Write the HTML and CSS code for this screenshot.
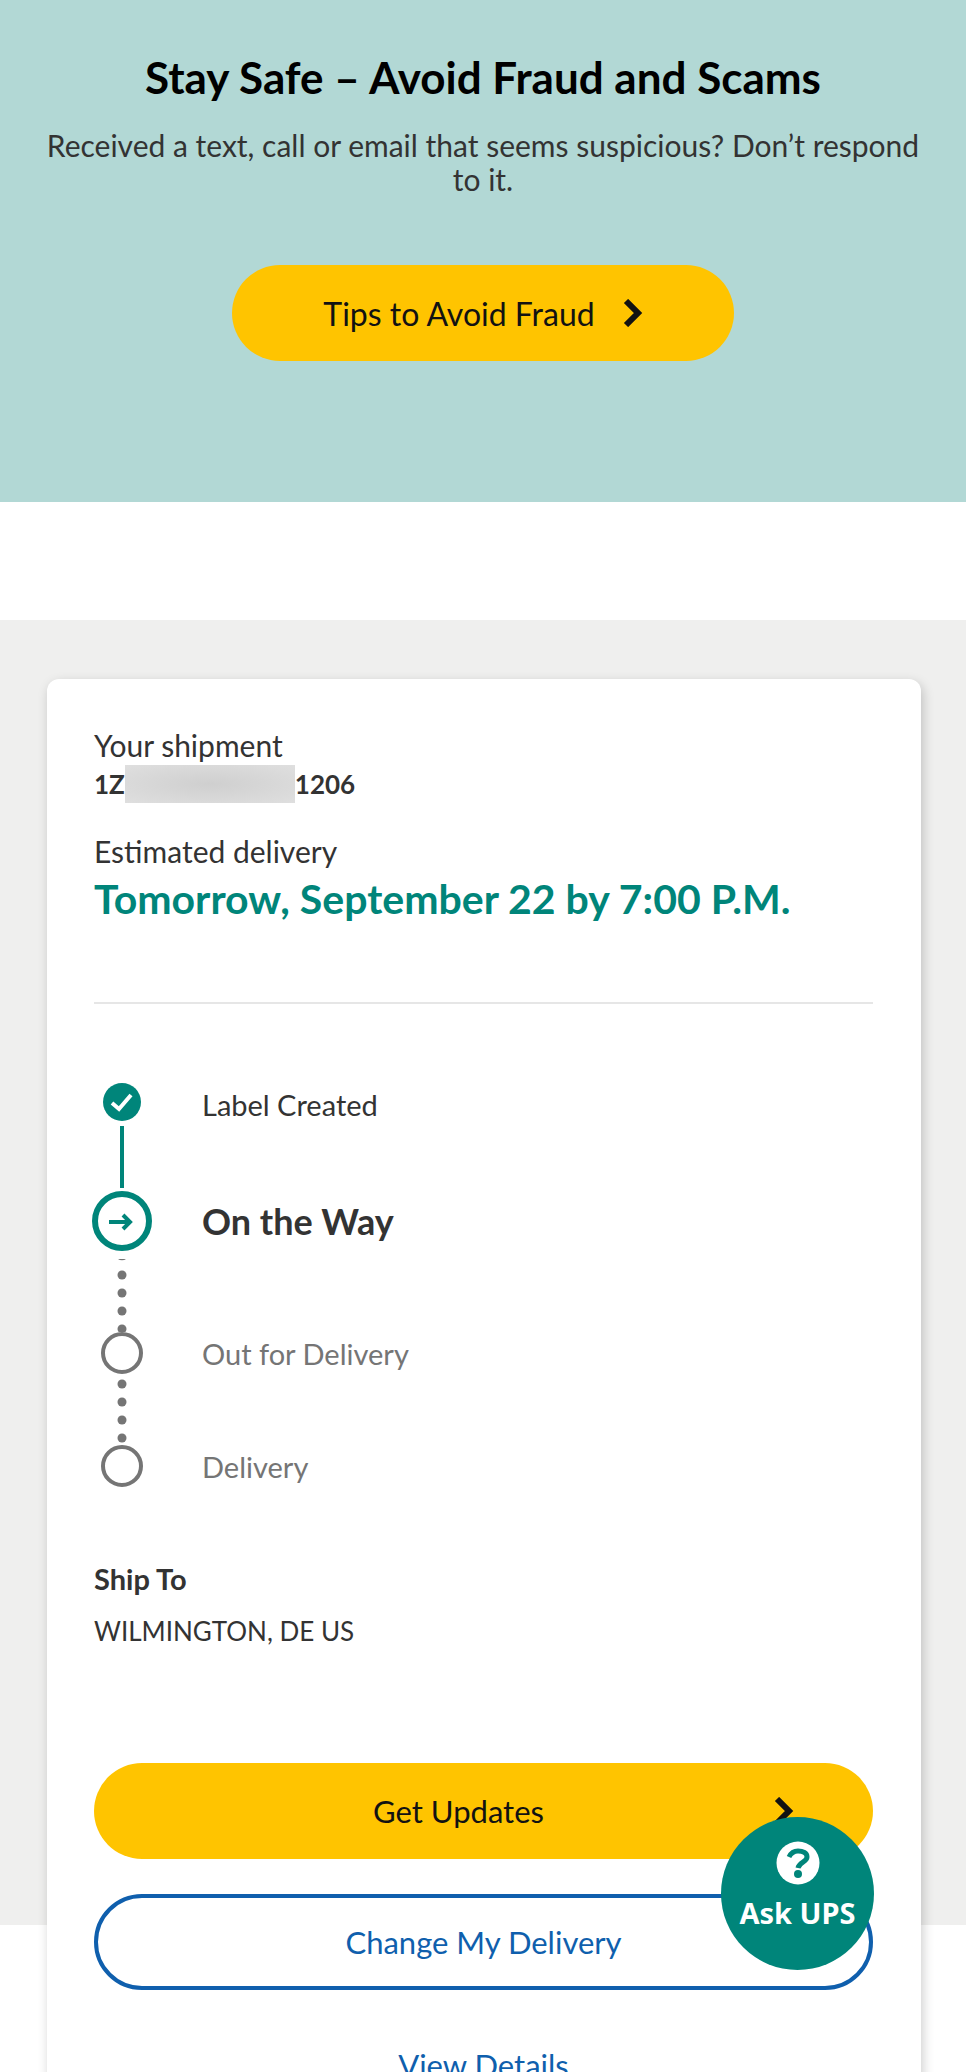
FILE: index.html
```html
<!DOCTYPE html>
<html lang="en">
<head>
    <meta charset="UTF-8">
    <meta name="viewport" content="width=device-width, initial-scale=1.0">
    <title>Your shipment</title>
    <link rel="stylesheet" href="styles.css">
</head>
<body>
    <div class="page">
        <header class="fraud">
            <h1>Stay Safe – Avoid Fraud and Scams</h1>
            <p>Received a text, call or email that seems suspicious? Don’t respond to it.</p>
            <a class="btn btn-tips" href="#">
                Tips to Avoid Fraud
                <svg class="chevron" viewBox="0 0 20 28"><path d="M3 2l12 12L3 26"/></svg>
            </a>
        </header>

        <main class="tracking">
            <section class="card">
                <p class="text">Your shipment</p>
                <p class="number">1Z<span class="hidden-digits"></span>1206</p>
                <p class="text">Estimated delivery</p>
                <h2>Tomorrow, September 22 by 7:00 P.M.</h2>
                <hr>

                <ol class="steps">
                    <li class="done">
                        <div class="marker">
                            <svg width="38" height="38" viewBox="0 0 38 38">
                                <circle class="fill" cx="19" cy="19" r="19"/>
                                <path class="tick" d="M9 20l7 6L28 12"/>
                            </svg>
                            <div class="line"></div>
                        </div>
                        <span class="label">Label Created</span>
                    </li>
                    <li class="current">
                        <div class="marker">
                            <svg width="60" height="60" viewBox="0 0 60 60">
                                <circle class="ring" cx="30" cy="30" r="27"/>
                                <path class="arrow" d="M17 31h21M31 24l7 7-7 7"/>
                            </svg>
                            <svg width="10" height="81" viewBox="0 0 10 81">
                                <path class="dot" d="M1 8h8a5 3 0 0 1-8 0z"/>
                                <circle class="dot" cx="5" cy="24" r="4.5"/>
                                <circle class="dot" cx="5" cy="42" r="4.5"/>
                                <circle class="dot" cx="5" cy="60" r="4.5"/>
                                <circle class="dot" cx="5" cy="78" r="4.5"/>
                            </svg>
                        </div>
                        <span class="label">On the Way</span>
                    </li>
                    <li>
                        <div class="marker">
                            <svg width="42" height="42" viewBox="0 0 42 42"><circle class="ring" cx="21" cy="21" r="19"/></svg>
                            <svg width="10" height="71" viewBox="0 0 10 71">
                                <circle class="dot" cx="5" cy="10" r="4.5"/>
                                <circle class="dot" cx="5" cy="28" r="4.5"/>
                                <circle class="dot" cx="5" cy="46" r="4.5"/>
                                <circle class="dot" cx="5" cy="64" r="4.5"/>
                            </svg>
                        </div>
                        <span class="label">Out for Delivery</span>
                    </li>
                    <li>
                        <div class="marker">
                            <svg width="42" height="42" viewBox="0 0 42 42"><circle class="ring" cx="21" cy="21" r="19"/></svg>
                        </div>
                        <span class="label">Delivery</span>
                    </li>
                </ol>

                <h3>Ship To</h3>
                <p class="address">WILMINGTON, DE US</p>

                <div class="actions">
                    <button class="btn btn-updates" type="button">
                        <span>Get Updates</span>
                        <svg class="chevron" viewBox="0 0 20 28"><path d="M3 2l12 12L3 26"/></svg>
                    </button>
                    <button class="btn btn-outline" type="button">Change My Delivery</button>
                    <a class="details" href="#">View Details</a>
                </div>
            </section>
        </main>

        <button class="ask" type="button">
            <svg width="44" height="44" viewBox="0 0 44 44">
                <circle cx="22" cy="22" r="21.5" fill="#fff"/>
                <path d="M13 16c2-4 5-6 9-6 5 0 9 2 9 6 0 5-8 5-9 11" fill="none" stroke="#00857a" stroke-width="5"/>
                <circle cx="22" cy="33" r="4" fill="#00857a"/>
            </svg>
            Ask UPS
        </button>
    </div>
</body>
</html>
```

FILE: styles.css
```css
* {
    box-sizing: border-box;
}

body {
    font-family: Lato, "Open Sans", sans-serif;
    font-size: 30px;
    color: #333;
    background-color: #fff;
    margin: 0;
}

h1, h2, h3, p, ol {
    margin: 0;
    padding: 0;
}

/* one screen high, the rest of the card is cut off */
.page {
    position: relative;
    height: 100vh;
    overflow: hidden;
}

.fraud {
    display: flex;
    flex-direction: column;
    align-items: center;
    padding: 50px 40px 141px;
    background-color: #b2d8d5;
    text-align: center;
}

.fraud h1 {
    color: #000;
    font-size: 44px;
    line-height: 54px;
}

.fraud p {
    margin: 24px 0 69px;
    line-height: 34px;
}

.btn {
    display: flex;
    align-items: center;
    justify-content: center;
    height: 96px;
    border: none;
    border-radius: 48px;
    background-color: #ffc400;
    color: #121212;
    font-family: inherit;
    font-size: 31px;
    text-decoration: none;
    cursor: pointer;
}

.btn-tips {
    gap: 28px;
    min-width: 502px;
    font-size: 32px;
}

.chevron {
    width: 20px;
    height: 28px;
    fill: none;
    stroke: #121212;
    stroke-width: 6;
}

.tracking {
    margin-top: 118px;
    padding: 59px 45px 0 47px;
    background-color: #efefee;
    display: flow-root;
}

/* the card hangs below the grey band */
.card {
    margin-bottom: -264px;
    padding: 46px 48px 96px 47px;
    background-color: #fff;
    border-radius: 12px;
    box-shadow: 2px 4px 12px rgba(0, 0, 0, 0.2);
}

.text {
    line-height: 40px;
}

.number {
    display: flex;
    align-items: center;
    height: 38px;
    margin-bottom: 28px;
    font-size: 26px;
    font-weight: bold;
}

.hidden-digits {
    width: 170px;
    height: 38px;
    background: radial-gradient(#cfcfcf, #dfdfdf);
}

.card h2 {
    margin-bottom: 75px;
    color: #00857a;
    font-size: 41px;
    line-height: 56px;
}

hr {
    height: 2px;
    margin: 0 0 79px;
    border: none;
    background-color: #e6e6e6;
}

.steps {
    margin: 0 0 70px -2px;
    list-style: none;
}

.steps li {
    display: flex;
    gap: 50px;
    color: #757575;
}

.marker {
    display: flex;
    flex-direction: column;
    align-items: center;
    width: 60px;
}

.line {
    width: 4px;
    height: 62px;
    margin: 5px 0 3px;
    background-color: #00857a;
}

.label {
    font-size: 29px;
    line-height: 44px;
}

.steps .done {
    color: #333;
}

.steps .current .label {
    color: #333;
    font-size: 36px;
    font-weight: bold;
    line-height: 60px;
}

.ring {
    fill: none;
    stroke: #757575;
    stroke-width: 4;
}

.current .ring {
    stroke: #00857a;
    stroke-width: 6;
}

.dot {
    fill: #757575;
}

.fill {
    fill: #00857a;
}

.tick {
    fill: none;
    stroke: #fff;
    stroke-width: 4;
}

.arrow {
    fill: none;
    stroke: #00857a;
    stroke-width: 4;
}

h3 {
    margin-bottom: 12px;
    font-size: 29px;
    line-height: 40px;
}

.address {
    font-size: 26px;
    line-height: 40px;
}

.actions {
    display: flex;
    flex-direction: column;
    gap: 35px;
    margin-top: 112px;
}

.btn-updates {
    padding: 0 79px;
}

.btn-updates span {
    flex: 1;
    padding-right: 30px;
}

.btn-outline {
    background-color: #fff;
    border: 4px solid #0f5fad;
    color: #0f5fad;
}

.details {
    align-self: center;
    margin-top: 12px;
    color: #0f5fad;
    font-size: 31px;
    line-height: 56px;
    text-decoration: none;
}

/* floating help button */
.ask {
    position: absolute;
    right: 92px;
    bottom: 102px;
    display: flex;
    flex-direction: column;
    align-items: center;
    gap: 8px;
    width: 153px;
    height: 153px;
    padding: 24px 0 0;
    border: none;
    border-radius: 50%;
    background-color: #00857a;
    color: #fff;
    font-family: "Noto Sans", sans-serif;
    font-size: 29px;
    font-weight: bold;
    line-height: 40px;
    cursor: pointer;
}
```
